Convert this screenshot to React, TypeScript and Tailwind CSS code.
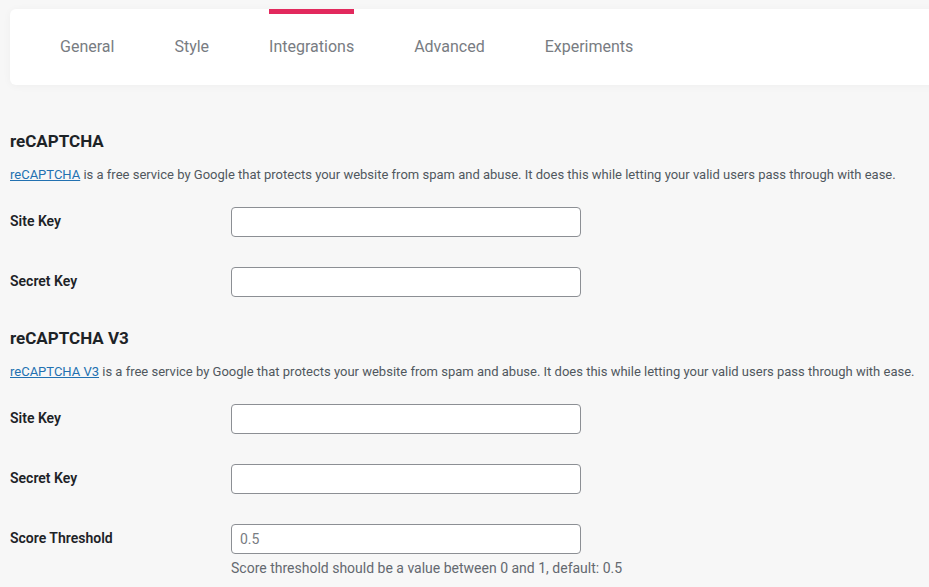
import React from 'react';

const tabs = ['General', 'Style', 'Integrations', 'Advanced', 'Experiments'];

function Field({ label, value, help }: { label: string; value?: string; help?: string }) {
  return (
    <div className="grid grid-cols-[221px_1fr] py-[15px]">
      <div className="pt-[4px] text-[14px] font-semibold text-[#1d2327] leading-[20px]">{label}</div>
      <div>
        <input
          type="text"
          defaultValue={value}
          className="w-[350px] h-[30px] bg-white border border-[#8c8f94] rounded-[4px] px-2 text-[14px] text-[#787c82] focus:outline-none"
        />
        {help && <p className="mt-[4px] text-[14px] leading-[20px] text-[#646970] -mb-[10px]">{help}</p>}
      </div>
    </div>
  );
}

function Section({ title, link, children }: { title: string; link: string; children: React.ReactNode }) {
  return (
    <section>
      <h2 className="text-[17px] font-bold text-[#1d2327] leading-[24px]">{title}</h2>
      <p className="mt-[12px] text-[13px] leading-[20px] text-[#50575e]">
        <a href="#" className="text-[#2271b1] underline">{link}</a> is a free service by Google that protects your website from spam and abuse. It does this while letting your valid users pass through with ease.
      </p>
      <div className="mt-[7px]">{children}</div>
    </section>
  );
}

export default function App() {
  return (
    <div className="min-h-screen bg-[#f7f7f7] pt-[9px] pl-[10px] overflow-hidden" style={{ fontFamily: 'Roboto, "Noto Sans", sans-serif' }}>
      {/* Tabs card */}
      <div className="h-[76px] -mr-5 bg-white rounded-[6px] shadow-[0_1px_8px_rgba(0,0,0,0.04)] flex pl-5">
        {tabs.map((t) => (
          <div key={t} className="px-[30px] flex">
            <div
              className={
                'flex items-center text-[16px] text-[#787c82] border-t-[5px] ' +
                (t === 'Integrations' ? 'border-[#e2295d]' : 'border-transparent')
              }
            >
              <span className="-mt-[5px]">{t}</span>
            </div>
          </div>
        ))}
      </div>

      <div className="mt-[44px]">
        <Section title="reCAPTCHA" link="reCAPTCHA">
          <Field label="Site Key" />
          <Field label="Secret Key" />
        </Section>
        <div className="mt-[14px]">
          <Section title="reCAPTCHA V3" link="reCAPTCHA V3">
            <Field label="Site Key" />
            <Field label="Secret Key" />
            <Field label="Score Threshold" value="0.5" help="Score threshold should be a value between 0 and 1, default: 0.5" />
          </Section>
        </div>
      </div>
    </div>
  );
}
